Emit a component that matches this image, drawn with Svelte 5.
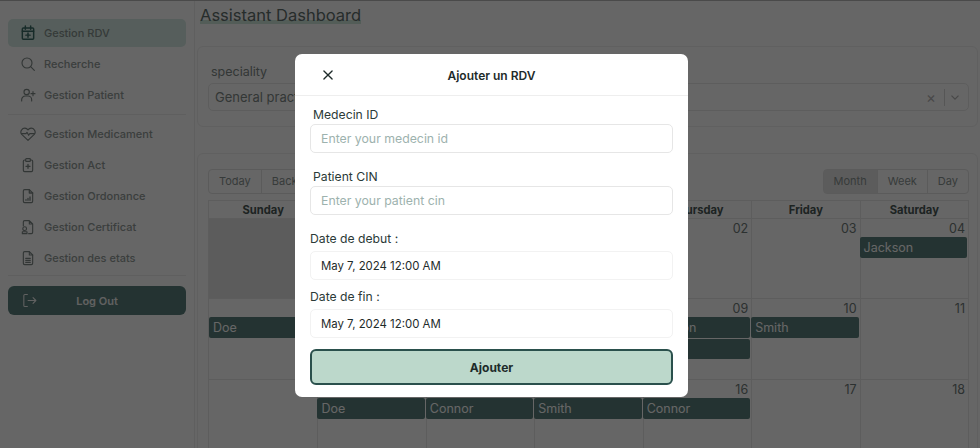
<script>
  const navTop = [
    { label: 'Gestion RDV', icon: 'calendar', active: true },
    { label: 'Recherche', icon: 'search' },
    { label: 'Gestion Patient', icon: 'user' }
  ];
  const navBottom = [
    { label: 'Gestion Medicament', icon: 'heart' },
    { label: 'Gestion Act', icon: 'clipboard' },
    { label: 'Gestion Ordonance', icon: 'chart' },
    { label: 'Gestion Certificat', icon: 'cert' },
    { label: 'Gestion des etats', icon: 'doc' }
  ];
  const days = ['Sunday', 'Monday', 'Tuesday', 'Wednesday', 'Thursday', 'Friday', 'Saturday'];
  const weeks = [
    {
      dates: ['28', '29', '30', '01', '02', '03', '04'],
      off: [0],
      events: [{ col: 7, row: 2, name: 'Jackson' }]
    },
    {
      dates: ['05', '06', '07', '08', '09', '10', '11'],
      off: [],
      events: [
        { col: 1, row: 2, name: 'Doe' },
        { col: 5, row: 2, name: 'Jackson' },
        { col: 6, row: 2, name: 'Smith' },
        { col: 5, row: 3, name: 'Doe' }
      ]
    },
    {
      dates: ['12', '13', '14', '15', '16', '17', '18'],
      off: [],
      events: [
        { col: 2, row: 2, name: 'Doe' },
        { col: 3, row: 2, name: 'Connor' },
        { col: 4, row: 2, name: 'Smith' },
        { col: 5, row: 2, name: 'Connor' }
      ]
    }
  ];
</script>

{#snippet navIcon(name)}
  <svg class="nav-icon" class:strong={name === 'calendar'} viewBox="0 0 24 24" fill="none" stroke="currentColor" stroke-width="1.7" stroke-linecap="round" stroke-linejoin="round">
    {#if name === 'calendar'}
      <path d="M5 4.500h14a1.500 1.500 0 0 1 1.500 1.500v14a1.500 1.500 0 0 1-1.500 1.500H5A1.500 1.500 0 0 1 3.500 20V6A1.500 1.500 0 0 1 5 4.500z" stroke-width="2.200" />
      <path d="M3.500 9.500h17M8 1.500v5M16 1.500v5M12 12v6.500M8.800 15.200h6.400" stroke-width="2.200" />
    {:else if name === 'search'}
      <circle cx="10.500" cy="10.500" r="7.500" />
      <path d="M16 16l5.500 5.500" />
    {:else if name === 'user'}
      <circle cx="10" cy="7.500" r="4" />
      <path d="M2.500 21v-2a5.500 5.500 0 0 1 5.500-5.500h4a5.500 5.500 0 0 1 5.500 5.500v2M19.500 7v6M16.500 10h6" />
    {:else if name === 'heart'}
      <path d="M12 21.500 3 13A5.600 5.600 0 0 1 2.500 5.800 5.600 5.600 0 0 1 12 6a5.600 5.600 0 0 1 9.500-.2A5.600 5.600 0 0 1 21 13z" />
      <path d="M2.500 11.500H9l1.500-2 2.500 4.500 1.500-2.500h7" />
    {:else if name === 'clipboard'}
      <path d="M8.500 4.500H7A2 2 0 0 0 5 6.500V20a2 2 0 0 0 2 2h10a2 2 0 0 0 2-2V6.500a2 2 0 0 0-2-2h-1.500" />
      <rect x="8.500" y="2.500" width="7" height="4" rx="1" />
      <path d="M12 11v6M9 14h6" stroke-width="2" />
    {:else if name === 'chart'}
      <path d="M14 2.500H7A2 2 0 0 0 5 4.500V20a2 2 0 0 0 2 2h10a2 2 0 0 0 2-2V7.500z" />
      <path d="M14 2.500v5h5M9 18.500v-1M12 18.500v-3M15 18.500v-5" stroke-width="2" />
    {:else if name === 'cert'}
      <path d="M5 10V4.500a2 2 0 0 1 2-2h7l5 5V20a2 2 0 0 1-2 2h-4M14 2.500v5h5" />
      <circle cx="7" cy="14.500" r="2.800" />
      <path d="M3.500 22v-2.800h7V22z" />
    {:else if name === 'doc'}
      <path d="M14 2.500H7A2 2 0 0 0 5 4.500V20a2 2 0 0 0 2 2h10a2 2 0 0 0 2-2V7.500z" />
      <path d="M14 2.500v5h5M8.500 12.500h7M8.500 15.500h7M8.500 18.500h7" />
    {/if}
  </svg>
{/snippet}

<div class="page">
  <aside class="sidebar">
    <nav class="group">
      {#each navTop as item}
        <div class="nav-item" class:active={item.active}>
          {@render navIcon(item.icon)}
          <span>{item.label}</span>
        </div>
      {/each}
    </nav>
    <nav class="group second">
      {#each navBottom as item}
        <div class="nav-item">
          {@render navIcon(item.icon)}
          <span>{item.label}</span>
        </div>
      {/each}
    </nav>
    <div class="logout">
      <svg viewBox="0 0 24 24" fill="none" stroke="currentColor" stroke-width="1.5" stroke-linecap="round" stroke-linejoin="round">
        <path d="M9 3.500H5.500a1.500 1.500 0 0 0-1.500 1.500v14a1.500 1.500 0 0 0 1.500 1.500H9M10 12h11M17 8l4 4-4 4" />
      </svg>
      <span>Log Out</span>
    </div>
  </aside>

  <main class="main">
    <h1><span>Assistant Dashboard</span></h1>

    <section class="card filter">
      <div class="filter-label">speciality</div>
      <div class="select">
        <span class="select-value">General practice</span>
        <span class="clear">×</span>
        <span class="sep"></span>
        <svg class="chev" viewBox="0 0 20 20" fill="none" stroke="currentColor" stroke-width="1.800"><path d="M5 8l5 5 5-5" /></svg>
      </div>
    </section>

    <section class="card calendar">
      <div class="toolbar">
        <div class="btn-group">
          <span class="btn">Today</span>
          <span class="btn">Back</span>
          <span class="btn">Next</span>
        </div>
        <div class="btn-group">
          <span class="btn on">Month</span>
          <span class="btn">Week</span>
          <span class="btn">Day</span>
        </div>
      </div>
      <div class="month">
        <div class="head">
          {#each days as day}
            <div class="head-cell">{day}</div>
          {/each}
        </div>
        {#each weeks as week}
          <div class="week">
            {#each week.dates as d, i}
              <div class="cell" class:off={week.off.includes(i)} style="grid-column: {i + 1}"></div>
              <div class="date" style="grid-column: {i + 1}">{d}</div>
            {/each}
            {#each week.events as ev}
              <div class="event" style="grid-column: {ev.col}; grid-row: {ev.row}">{ev.name}</div>
            {/each}
          </div>
        {/each}
      </div>
    </section>
  </main>

  <div class="overlay">
    <div class="modal">
      <header class="modal-head">
        <svg class="close" viewBox="0 0 24 24" fill="none" stroke="currentColor" stroke-width="2.300" stroke-linecap="round"><path d="M5 5l14 14M19 5 5 19" /></svg>
        <h2>Ajouter un RDV</h2>
      </header>
      <div class="modal-body">
        <label class="field-label indent" for="medecin">Medecin ID</label>
        <input id="medecin" class="field" placeholder="Enter your medecin id" />
        <label class="field-label indent gap" for="cin">Patient CIN</label>
        <input id="cin" class="field" placeholder="Enter your patient cin" />
        <label class="field-label gap" for="debut">Date de debut :</label>
        <input id="debut" class="field date-field" value="May 7, 2024 12:00 AM" />
        <label class="field-label gap-small" for="fin">Date de fin :</label>
        <input id="fin" class="field date-field" value="May 7, 2024 12:00 AM" />
        <button class="submit">Ajouter</button>
      </div>
    </div>
  </div>
</div>

<style>
  :global(body) {
    margin: 0;
    background: #fff;
  }

  .page {
    position: relative;
    display: flex;
    width: 980px;
    height: 448px;
    overflow: hidden;
    font-family: Inter, "Open Sans", sans-serif;
    color: #2b3a38;
  }

  .sidebar {
    width: 195px;
    flex-shrink: 0;
    box-sizing: border-box;
    padding: 19px 8px 0;
    border-right: 1px solid #eee;
  }

  .group {
    display: flex;
    flex-direction: column;
    gap: 3px;
    padding-bottom: 5px;
    border-bottom: 1px solid #eee;
  }

  .second {
    padding-top: 5px;
    padding-bottom: 3px;
  }

  .nav-item {
    display: flex;
    align-items: center;
    gap: 8px;
    height: 28px;
    padding-left: 12px;
    border-radius: 5px;
    font-size: 11px;
    font-weight: 500;
    color: #949c9a;
  }

  .nav-item.active {
    background: #d7ece5;
    color: #86928f;
  }

  .nav-icon {
    width: 16px;
    height: 16px;
    flex-shrink: 0;
    color: #7d8785;
  }

  .nav-icon.strong {
    color: #3a6b66;
  }

  .logout {
    position: relative;
    display: flex;
    align-items: center;
    justify-content: center;
    height: 29px;
    margin-top: 10px;
    border-radius: 6px;
    background: #5a807d;
    color: #f2f2f2;
    font-size: 11px;
    font-weight: 600;
  }

  .logout svg {
    position: absolute;
    left: 13px;
    width: 17px;
    height: 17px;
  }

  .main {
    flex: 1;
    padding: 0 2px;
    min-width: 0;
  }

  h1 {
    margin: 6px 0 0;
    height: 21px;
    font-size: 16.500px;
    font-weight: 400;
    line-height: 18px;
    color: #5f6f6d;
    padding-left: 3px;
  }

  h1 span {
    display: inline-block;
    height: 18px;
    background: linear-gradient(#cfe8dc, #cfe8dc) no-repeat bottom / 100% 4px;
  }

  .card {
    border: 1px solid #f0f0f0;
    border-radius: 6px;
    box-sizing: border-box;
  }

  .filter {
    height: 81px;
    margin-top: 19px;
    padding: 16px 8px 16px 10px;
  }

  .filter-label {
    font-size: 12.500px;
    color: #7f8a88;
    line-height: 18px;
    padding-left: 3px;
  }

  .select {
    display: flex;
    align-items: center;
    height: 28px;
    box-sizing: border-box;
    margin-top: 2px;
    padding: 0 6px;
    border: 1px solid #e8e8e8;
    border-radius: 5px;
    color: #7f8a88;
    font-size: 13px;
  }

  .select-value {
    flex: 1;
  }

  .clear {
    font-size: 15px;
    color: #b4b4b4;
    margin-right: 8px;
  }

  .sep {
    width: 1px;
    height: 17px;
    background: #d8d8d8;
    margin-right: 3px;
  }

  .chev {
    width: 14px;
    height: 14px;
    color: #b4b4b4;
  }

  .calendar {
    margin-top: 26px;
    height: 320px;
    padding: 15px 8px 0 10px;
  }

  .toolbar {
    display: flex;
    justify-content: space-between;
    height: 25px;
  }

  .btn-group {
    display: flex;
    border: 1px solid #e4e4e4;
    border-radius: 4px;
  }

  .btn {
    padding: 0 10px;
    font-size: 11px;
    line-height: 23px;
    color: #8a9492;
    border-left: 1px solid #e4e4e4;
  }

  .btn:first-child {
    border-left: 0;
  }

  .btn.on {
    background: #e6e6e6;
  }

  .month {
    margin-top: 6px;
    border: 1px solid #e8e8e8;
    border-bottom: 0;
  }

  .head {
    display: grid;
    grid-template-columns: repeat(7, 1fr);
    box-sizing: border-box;
    height: 18px;
    border-bottom: 1px solid #e8e8e8;
  }

  .head-cell {
    text-align: center;
    font-size: 11.200px;
    font-weight: 700;
    line-height: 18px;
    color: #4a5856;
    border-left: 1px solid #e8e8e8;
  }

  .head-cell:first-child {
    border-left: 0;
  }

  .week {
    display: grid;
    grid-template-columns: repeat(7, 1fr);
    grid-template-rows: 18px 22px 21px 1fr;
    box-sizing: border-box;
    height: 80.300px;
    border-bottom: 1px solid #e8e8e8;
  }

  .cell {
    grid-row: 1 / 5;
    border-left: 1px solid #e8e8e8;
  }

  .cell:first-child {
    border-left: 0;
  }

  .cell.off {
    background: #e6e6e6;
  }

  .date {
    grid-row: 1;
    text-align: right;
    padding-right: 3px;
    font-size: 12.500px;
    line-height: 20px;
    color: #6f7a78;
  }

  .event {
    margin: 0 1px 1px 0;
    padding-left: 4px;
    border-radius: 2px;
    background: #5a807d;
    color: #fff;
    font-size: 12.500px;
    line-height: 21px;
  }

  .overlay {
    position: absolute;
    inset: 0;
    display: flex;
    justify-content: center;
    align-items: flex-start;
    padding: 54px 0 0 3px;
    background: rgba(0, 0, 0, 0.6);
    box-shadow: inset 0 1px 0 #4a4a4a;
  }

  .modal {
    width: 393px;
    height: 343px;
    border-radius: 7px;
    background: #fff;
    color: #1e2b2a;
  }

  .modal-head {
    position: relative;
    display: flex;
    align-items: center;
    justify-content: center;
    height: 41px;
    border-bottom: 1px solid #eee;
  }

  .close {
    position: absolute;
    left: 26px;
    width: 14px;
    height: 14px;
  }

  h2 {
    margin: 0;
    padding-top: 1px;
    font-size: 12px;
    font-weight: 600;
  }

  .modal-body {
    display: flex;
    flex-direction: column;
    padding: 10px 15px 0;
  }

  .field-label {
    font-size: 12.200px;
    line-height: 18px;
    color: #2b3a38;
  }

  .indent {
    padding-left: 3px;
  }

  .gap {
    margin-top: 15px;
  }

  .gap-small {
    margin-top: 8px;
  }

  .field {
    box-sizing: border-box;
    width: 363px;
    height: 29px;
    padding: 0 10px;
    border: 1px solid #e6e6e6;
    border-radius: 5px;
    font-family: inherit;
    font-size: 12.300px;
    color: #1e2b2a;
    outline: none;
  }

  .field::placeholder {
    color: #9db2ae;
  }

  .date-field {
    border-color: #f2f2f2;
    margin-top: 3px;
    font-size: 11.400px;
  }

  .submit {
    height: 36px;
    margin-top: 11px;
    border: 2px solid #2a504c;
    border-radius: 6px;
    background: #bcd8cb;
    font-family: inherit;
    font-size: 12px;
    font-weight: 700;
    color: #1e2b2a;
  }
</style>
